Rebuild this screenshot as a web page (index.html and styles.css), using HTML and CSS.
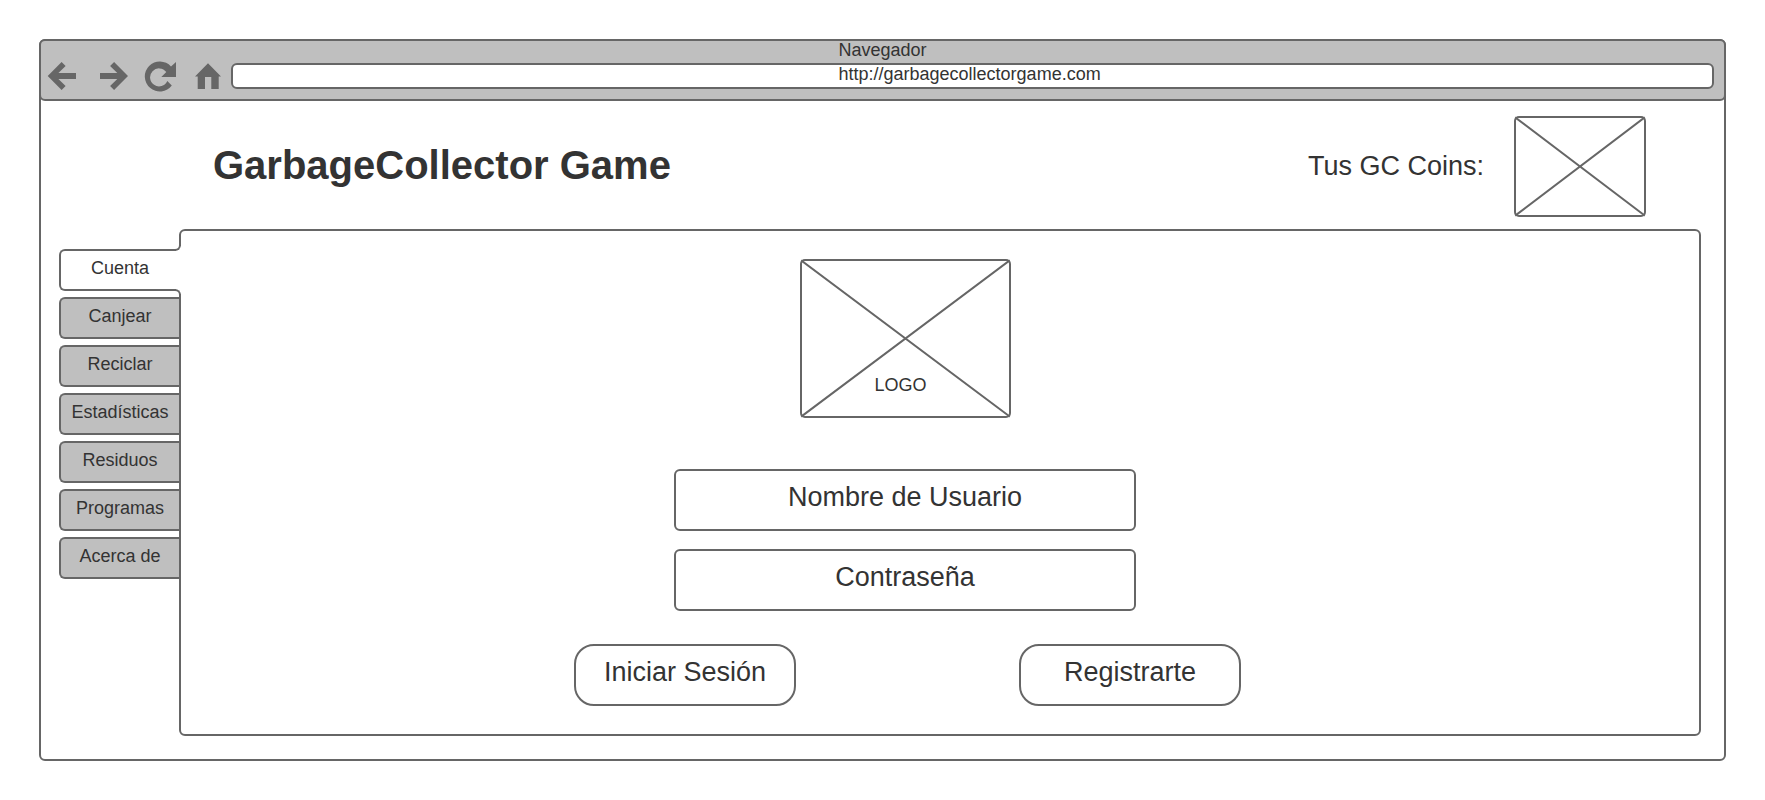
FILE: index.html
```html
<!DOCTYPE html>
<html lang="es">
<head>
<meta charset="utf-8">
<meta name="viewport" content="width=device-width, initial-scale=1">
<title>GarbageCollector Game</title>
<link rel="stylesheet" href="styles.css">
</head>
<body>
<div class="browser">
  <div class="toolbar">
    <div class="toolbar-title">Navegador</div>
    <div class="toolbar-row">
      <div class="nav">
        <button type="button" class="nav-button" aria-label="Atrás">
          <svg viewBox="0 0 34 32"><path d="M.7 16 14.6 2l4 4-7.2 7H29v6H11.400l7.200 7-4 4z"/></svg>
        </button>
        <button type="button" class="nav-button" aria-label="Adelante">
          <svg viewBox="0 0 34 32"><path d="M33 16 19.100 2l-4 4 7.200 7H5v6h17.300l-7.200 7 4 4z"/></svg>
        </button>
        <button type="button" class="nav-button" aria-label="Recargar">
          <svg viewBox="0 0 34 32"><path d="M33 2v15H18.300l5-5A9 9 0 1 0 24.300 21l4.500 4.500A15 15 0 1 1 28 6.500z"/></svg>
        </button>
        <button type="button" class="nav-button" aria-label="Inicio">
          <svg viewBox="0 0 34 32"><path d="M17 3.300 30 16.500h-2.300V29h-7.400V17h-6.300v12H6.700V16.500H4z"/></svg>
        </button>
      </div>
      <input class="address" type="text" aria-label="Dirección" value="http://garbagecollectorgame.com">
    </div>
  </div>

  <header class="header">
    <h1 class="title">GarbageCollector Game</h1>
    <div class="coins">
      <span>Tus GC Coins:</span>
      <div class="placeholder placeholder-coins">
        <svg class="cross" viewBox="0 0 100 100" preserveAspectRatio="none"><path d="M0 0 100 100M100 0 0 100"/></svg>
      </div>
    </div>
  </header>

  <main class="main">
    <nav class="tabs">
      <button type="button" class="tab tab-active">Cuenta</button>
      <button type="button" class="tab">Canjear</button>
      <button type="button" class="tab">Reciclar</button>
      <button type="button" class="tab">Estadísticas</button>
      <button type="button" class="tab">Residuos</button>
      <button type="button" class="tab">Programas</button>
      <button type="button" class="tab">Acerca de</button>
    </nav>
    <section class="panel">
      <form class="login">
        <div class="fields">
          <div class="placeholder placeholder-logo">
            <svg class="cross" viewBox="0 0 100 100" preserveAspectRatio="none"><path d="M0 0 100 100M100 0 0 100"/></svg>
            <span class="logo-text">LOGO</span>
          </div>
          <input class="field" type="text" placeholder="Nombre de Usuario" aria-label="Nombre de Usuario">
          <input class="field" type="password" placeholder="Contraseña" aria-label="Contraseña">
        </div>
        <div class="actions">
          <button type="button" class="action">Iniciar Sesión</button>
          <button type="button" class="action">Registrarte</button>
        </div>
      </form>
    </section>
  </main>
</div>
</body>
</html>
```
FILE: styles.css
```css
:root {
  --line: #666;
  --fill: #bfbfbf;
  --ink: #333;
}

*,
*::before,
*::after {
  box-sizing: border-box;
}

body {
  margin: 0;
  padding: 39px;
  background: #fff;
  color: var(--ink);
  font-family: "Liberation Sans", Arial, sans-serif;
  font-size: 18px;
}

button,
input {
  margin: 0;
  color: inherit;
  font: inherit;
}

.browser {
  border: 2px solid var(--line);
  border-radius: 6px;
}

/* Toolbar */
.toolbar {
  margin: -2px -2px 0;
  padding-bottom: 7px;
  border: 2px solid var(--line);
  border-radius: 6px;
  background: var(--fill);
}

.toolbar-title {
  padding: 0 0 1px calc(50% - 44px);
  line-height: 18px;
}

.toolbar-row {
  display: flex;
  align-items: center;
  gap: 6px;
  padding-right: 10px;
}

.nav {
  display: flex;
  gap: 14px;
  padding-left: 6px;
}

.nav-button {
  width: 34px;
  height: 32px;
  padding: 0;
  border: 0;
  background: none;
}

.nav-button svg {
  display: block;
  width: 100%;
  height: 100%;
  fill: var(--line);
}

.address {
  flex: 1;
  min-width: 0;
  height: 26px;
  padding: 0 0 4px calc(50% - 231px);
  border: 2px solid var(--line);
  border-radius: 6px;
  background: #fff;
}

/* Header */
.header {
  display: flex;
  align-items: center;
  justify-content: space-between;
  padding: 15px 78px 12px 172px;
}

.title {
  margin: 0;
  padding-bottom: 4px;
  font-size: 40px;
  line-height: 48px;
}

.coins {
  display: flex;
  align-items: center;
  gap: 30px;
  font-size: 27px;
}

.placeholder {
  position: relative;
  border: 2px solid var(--line);
  border-radius: 5px;
}

.placeholder-coins {
  width: 132px;
  height: 101px;
}

.cross {
  display: block;
  width: 100%;
  height: 100%;
  overflow: visible;
  fill: none;
  stroke: var(--line);
  stroke-width: 2px;
  stroke-linecap: square;
}

.cross path {
  vector-effect: non-scaling-stroke;
}

/* Tabs and panel */
.main {
  display: flex;
  padding: 0 23px 23px 18px;
}

.tabs {
  display: flex;
  flex: none;
  flex-direction: column;
  gap: 6px;
  width: 120px;
  padding-top: 20px;
}

.tab {
  height: 42px;
  padding: 0 0 4px;
  border: 2px solid var(--line);
  border-right: 0;
  border-radius: 6px 0 0 6px;
  background: var(--fill);
}

.tab-active {
  position: relative;
  z-index: 1;
  margin-right: -2px;
  padding-right: 2px;
  background: #fff;
}

.tab-active::before,
.tab-active::after {
  content: "";
  position: absolute;
  right: 0;
  width: 8px;
  height: 8px;
  border-right: 2px solid var(--line);
  background: #fff;
}

.tab-active::before {
  top: -8px;
  border-bottom: 2px solid var(--line);
  border-bottom-right-radius: 6px;
  box-shadow: 3px 3px 0 #fff;
}

.tab-active::after {
  bottom: -8px;
  border-top: 2px solid var(--line);
  border-top-right-radius: 6px;
  box-shadow: 3px -3px 0 #fff;
}

.panel {
  flex: 1;
  min-width: 0;
  padding: 28px 65px 28px 0;
  border: 2px solid var(--line);
  border-radius: 6px;
}

/* Login form */
.login {
  display: flex;
  flex-direction: column;
  gap: 33px;
  max-width: 667px;
  margin: 0 auto;
}

.fields {
  display: flex;
  flex-direction: column;
  align-items: center;
  gap: 18px;
  padding: 0 105px 0 100px;
}

.placeholder-logo {
  width: 211px;
  height: 159px;
  margin-bottom: 33px;
}

.logo-text {
  position: absolute;
  right: 0;
  bottom: 21px;
  left: 0;
  padding-right: 9px;
  line-height: 20px;
  text-align: center;
}

.field {
  width: 100%;
  height: 62px;
  padding: 0 0 6px;
  border: 2px solid var(--line);
  border-radius: 6px;
  background: #fff;
  font-size: 27px;
  text-align: center;
}

.field::placeholder {
  color: var(--ink);
  opacity: 1;
}

.actions {
  display: flex;
  justify-content: space-between;
}

.action {
  width: 222px;
  height: 62px;
  padding: 0 0 6px;
  border: 2px solid var(--line);
  border-radius: 20px;
  background: #fff;
  font-size: 27px;
}
```
